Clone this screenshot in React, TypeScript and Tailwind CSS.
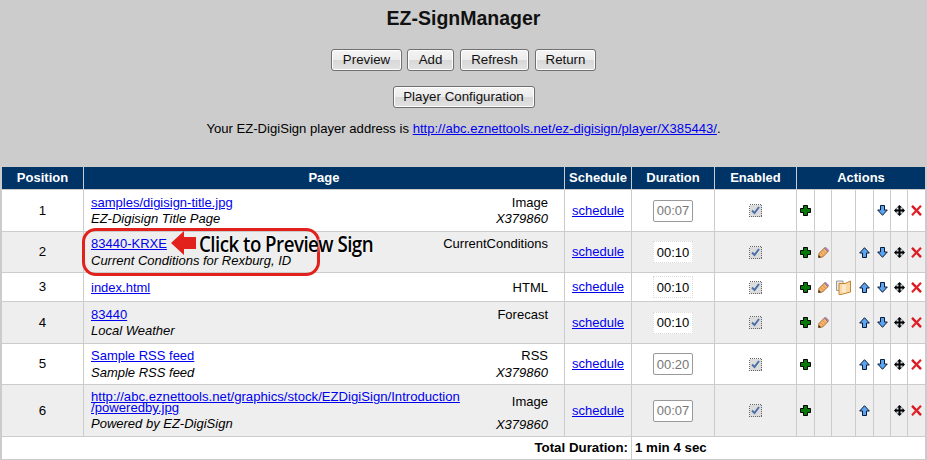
import type { ReactNode } from 'react';

const font = { arial: 'font-["Liberation_Sans",Arial,sans-serif]' };

function PlusIcon() {
    return (
        <svg width="11" height="11" viewBox="0 0 11 11" className="block mx-auto">
            <path d="M3.500 .5h4v3h3v4h-3v3h-4v-3h-3v-4h3z" fill="#067a06" stroke="#000" strokeWidth="1" />
        </svg>
    );
}

function PencilIcon() {
    return (
        <svg width="11" height="11" viewBox="0 0 11 11" className="block mx-auto">
            <path d="M.4 10.600l.6-4.200L6.400 1l3.600 3.600-5.400 5.400z" fill="#f7b56e" stroke="#9c6428" strokeWidth=".9" />
            <path d="M2.600 5.400l3 3M4.600 3.400l3 3" stroke="#c9803a" strokeWidth=".7" />
            <path d="M6.400 1l3.600 3.600 .8-1.200L7.600 .2z" fill="#b889c4" stroke="#7d5a8a" strokeWidth=".6" />
            <path d="M.4 10.600l.4-2.600 2.200 2.200z" fill="#3a2a18" />
        </svg>
    );
}

function FolderIcon() {
    return (
        <svg width="15" height="15" viewBox="0 0 15 15" className="block mx-auto">
            <path d="M.5 1h6.500v9.500H.5z" fill="#e8e8e8" stroke="#9a9a9a" />
            <path d="M3 3.500h6L14.500 1v11L5 14.500H3z" fill="#f7d9a6" stroke="#c9822e" />
            <path d="M6 4.500h4v8H6z" fill="#fbe9c9" />
        </svg>
    );
}

function UpIcon() {
    return (
        <svg width="11" height="11" viewBox="0 0 11 11" className="block mx-auto">
            <path d="M5.500 .7l4.800 5.300H7.500v4.500h-4V6H.7z" fill="#5aa5ee" stroke="#0a1a3a" strokeWidth="1" />
        </svg>
    );
}

function DownIcon() {
    return (
        <svg width="11" height="11" viewBox="0 0 11 11" className="block mx-auto">
            <path d="M5.500 10.300L.7 5h2.800V.5h4V5h2.800z" fill="#5aa5ee" stroke="#0a1a3a" strokeWidth="1" />
        </svg>
    );
}

function MoveIcon() {
    return (
        <svg width="11" height="11" viewBox="0 0 11 11" className="block mx-auto">
            <circle cx="5.500" cy="5.500" r="4.500" fill="#d5dde2" />
            <path d="M5.500 0l2.500 2.500H6.500v2h2V3L11 5.500 8.500 8V6.500h-2v2H8L5.500 11 3 8.500h1.500v-2h-2V8L0 5.500 2.500 3v1.500h2v-2H3z" fill="#000" />
        </svg>
    );
}

function DeleteIcon() {
    return (
        <svg width="11" height="11" viewBox="0 0 11 11" className="block mx-auto">
            <path d="M1 .8l9 9.400" stroke="#d81a22" strokeWidth="2.400" />
            <path d="M10 .8l-9 9.400" stroke="#e0232b" strokeWidth="2.200" />
        </svg>
    );
}

function CheckedBox() {
    return (
        <svg width="13" height="13" viewBox="0 0 13 13" className="block mx-auto" shapeRendering="crispEdges">
            <rect x=".5" y=".5" width="12" height="12" fill="#dcdcdc" stroke="#666" strokeDasharray="1 1" />
            <path d="M3 6.500l2.500 2.500L10 3" fill="none" stroke="#4a6fa8" strokeWidth="2" shapeRendering="auto" />
        </svg>
    );
}

function PageButton({ children, width }: { children: ReactNode; width: string }) {
    return (
        <button className={`${width} h-[22px] rounded-[3px] border border-[#707070] bg-[linear-gradient(#f4f4f4_0%,#ececec_50%,#d8d8d8_52%,#e2e2e2_100%)] text-[13.300px] text-[#111] shadow-[inset_0_0_0_1px_#fff]`}>
            {children}
        </button>
    );
}

const headerCell = 'bg-[#003366] text-white font-bold text-[13px] text-center p-0';

type ActionFlags = { plus?: boolean; edit?: boolean; folder?: boolean; up?: boolean; down?: boolean };

interface Row {
    pos: number;
    height: string;
    link: ReactNode;
    desc?: string;
    type: string;
    id?: string;
    duration: string;
    locked: boolean;
    actions: ActionFlags;
}

const rows: Row[] = [
    { pos: 1, height: 'h-[41px]', link: 'samples/digisign-title.jpg', desc: 'EZ-Digisign Title Page', type: 'Image', id: 'X379860', duration: '00:07', locked: true, actions: { plus: true, down: true } },
    { pos: 2, height: 'h-[40px]', link: '83440-KRXE', desc: 'Current Conditions for Rexburg, ID', type: 'CurrentConditions', duration: '00:10', locked: false, actions: { plus: true, edit: true, up: true, down: true } },
    { pos: 3, height: 'h-[28px]', link: 'index.html', type: 'HTML', duration: '00:10', locked: false, actions: { plus: true, edit: true, folder: true, up: true, down: true } },
    { pos: 4, height: 'h-[41px]', link: '83440', desc: 'Local Weather', type: 'Forecast', duration: '00:10', locked: false, actions: { plus: true, edit: true, up: true, down: true } },
    { pos: 5, height: 'h-[40px]', link: 'Sample RSS feed', desc: 'Sample RSS feed', type: 'RSS', id: 'X379860', duration: '00:20', locked: true, actions: { plus: true, up: true, down: true } },
    {
        pos: 6,
        height: 'h-[51px]',
        link: (
            <span className="text-[13.150px]">
                http://abc.eznettools.net/graphics/stock/EZDigiSign/Introduction
                <br />
                /poweredby.jpg
            </span>
        ),
        desc: 'Powered by EZ-DigiSign',
        type: 'Image',
        id: 'X379860',
        duration: '00:07',
        locked: true,
        actions: { plus: true, up: true },
    },
];

function TableRow({ row }: { row: Row }) {
    const bg = row.pos % 2 === 0 ? 'bg-[#eeeeee]' : 'bg-white';
    const cell = `${bg} p-0 text-center`;
    const tall = row.pos === 6;
    // the 40px rows sit a pixel higher on their first line
    const short = row.pos === 2 || row.pos === 5;
    return (
        <tr className={row.height}>
            <td className={cell}>{row.pos}</td>
            <td className={`${bg} p-0 pl-[7px] pr-[16px] text-[13px]`}>
                <div className="flex justify-between">
                    <div>
                        <a className={`block text-[#0000ee] underline leading-[11px] ${short ? 'pt-[1px]' : 'pt-[2px]'}`}>{row.link}</a>
                        {row.desc && <div className={`italic leading-[15px] ${short ? 'mt-[4px]' : 'mt-[3px]'}`}>{row.desc}</div>}
                    </div>
                    <div className="text-right">
                        <div className={`leading-[12px] ${tall ? 'pt-[7px]' : short ? 'pt-[1px]' : 'pt-[2px]'}`}>{row.type}</div>
                        {row.id && <div className={`italic leading-[15px] ${tall ? 'mt-[9px]' : short ? 'mt-[3px]' : 'mt-[2px]'}`}>{row.id}</div>}
                    </div>
                </div>
            </td>
            <td className={`${cell} text-[13px]`}>
                <a className="text-[#0000ee] underline">schedule</a>
            </td>
            <td className={cell}>
                <input
                    readOnly
                    value={row.duration}
                    className={`w-[40px] h-[22px] text-center align-middle text-[13px] outline-none ${
                        row.locked
                            ? 'border border-[#999] rounded-[2px] text-[#777] bg-white'
                            : 'border border-dotted border-[#ddd] text-black bg-white'
                    }`}
                />
            </td>
            <td className={cell}>
                <CheckedBox />
            </td>
            <td className={cell}>{row.actions.plus && <PlusIcon />}</td>
            <td className={cell}>{row.actions.edit && <PencilIcon />}</td>
            <td className={cell}>{row.actions.folder && <FolderIcon />}</td>
            <td className={cell}>{row.actions.up && <UpIcon />}</td>
            <td className={cell}>{row.actions.down && <DownIcon />}</td>
            <td className={cell}>
                <MoveIcon />
            </td>
            <td className={cell}>
                <DeleteIcon />
            </td>
        </tr>
    );
}

export default function App() {
    return (
        <div className={`relative w-[927px] h-[460px] overflow-hidden bg-[#cccccc] text-black text-[13.300px] ${font.arial}`}>
            <h1 className="text-center text-[19.500px] font-bold leading-[23px] pt-[7px] text-[#111]">EZ-SignManager</h1>

            <div className="flex justify-center mt-[18px] pt-[1px]">
                <PageButton width="w-[71px]">Preview</PageButton>
                <div className="w-[5px]" />
                <PageButton width="w-[47px]">Add</PageButton>
                <div className="w-[6px]" />
                <PageButton width="w-[69px]">Refresh</PageButton>
                <div className="w-[6px]" />
                <PageButton width="w-[61px]">Return</PageButton>
            </div>
            <div className="flex justify-center mt-[15px]">
                <PageButton width="w-[142px]">Player Configuration</PageButton>
            </div>
            <p className="text-center text-[13.100px] leading-[15px] mt-[13px]">
                Your EZ-DigiSign player address is <a className="text-[#0000ee] underline">http://abc.eznettools.net/ez-digisign/player/X385443/</a>.
            </p>

            <table className="table-fixed border-separate border-spacing-[1px] absolute left-[1px] top-[166px] w-[925px]">
                <colgroup>
                    <col className="w-[81px]" />
                    <col className="w-[480px]" />
                    <col className="w-[66px]" />
                    <col className="w-[82px]" />
                    <col className="w-[81px]" />
                    <col className="w-[17px]" />
                    <col className="w-[16px]" />
                    <col className="w-[23px]" />
                    <col className="w-[17px]" />
                    <col className="w-[16px]" />
                    <col className="w-[16px]" />
                    <col className="w-[17px]" />
                </colgroup>
                <thead>
                    <tr className="h-[22px]">
                        <th className={headerCell}>Position</th>
                        <th className={headerCell}>Page</th>
                        <th className={headerCell}>Schedule</th>
                        <th className={headerCell}>Duration</th>
                        <th className={headerCell}>Enabled</th>
                        <th className={headerCell} colSpan={7}>
                            Actions
                        </th>
                    </tr>
                </thead>
                <tbody>
                    {rows.map((row) => (
                        <TableRow key={row.pos} row={row} />
                    ))}
                    <tr className="h-[22px]">
                        <td colSpan={3} className="bg-white p-0 pr-[3px] text-right font-bold">
                            Total Duration:
                        </td>
                        <td colSpan={9} className="bg-white p-0 pl-[3px] font-bold">
                            1 min 4 sec
                        </td>
                    </tr>
                </tbody>
            </table>

            {/* Annotation drawn over the table */}
            <div className="absolute left-[82px] top-[228px] w-[238px] h-[48px] rounded-[14px] border-[3px] border-[#e2201c]" />
            <svg width="25" height="24" viewBox="0 0 25 24" className="absolute left-[171px] top-[231px]">
                <path d="M0 12L13 0v6h12v12H13v6z" fill="#e2201c" />
            </svg>
            <div className="absolute left-[199px] top-[231px] font-['Open_Sans',sans-serif] font-semibold text-[21.500px] leading-[26px] whitespace-nowrap tracking-[-0.6px] origin-left scale-x-[0.87] [text-shadow:0_0_2px_#fff,0_0_2px_#fff]">
                Click to Preview Sign
            </div>
        </div>
    );
}
